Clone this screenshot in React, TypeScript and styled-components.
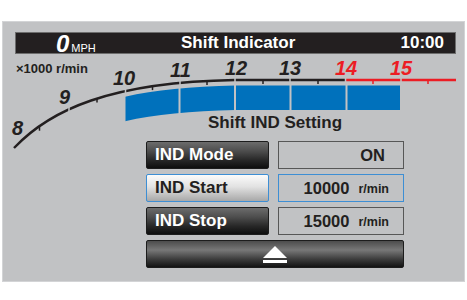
import React from 'react';
import styled, { createGlobalStyle } from 'styled-components';

const INK = '#231f20';
const PANEL = '#c1c2c4';
const BLUE = '#0071bc';
const RED = '#ec1c24';
const FOCUS = '#3d8ed4';

const GlobalStyle = createGlobalStyle`
  html, body { margin: 0; padding: 0; background: #ffffff; }
  body { font-family: "Liberation Sans", Arial, sans-serif; }
`;

const Panel = styled.div`
  box-sizing: border-box;
  width: 463px;
  height: 261px;
  margin: 21px 0 0 2px;
  background: ${PANEL};
  border: 1px solid #d3d4d6;
  display: flex;
  flex-direction: column;
`;

const Header = styled.header`
  box-sizing: border-box;
  height: 22px;
  margin: 10px 8px 0 12px;
  background: ${INK};
  border: 1px solid #6d6d6d;
  color: #ffffff;
  display: grid;
  grid-template-columns: 165px auto 1fr;
  font-weight: 700;
  font-size: 17px;
  line-height: 20px;
  white-space: nowrap;
`;

const Speed = styled.div`
  padding: 1px 0 0 40px;
  font-size: 24px;
  font-style: italic;
  line-height: 20px;
`;

const SpeedUnit = styled.span`
  font-size: 11px;
  font-style: normal;
  font-weight: 400;
  line-height: 0;
  margin-left: 2px;
`;

const Title = styled.div``;

const Clock = styled.div`
  text-align: right;
  padding-right: 11px;
`;

const Dial = styled.div`
  flex: 1;
  display: grid;
  grid-template: 1fr / 1fr;
  & > * {
    grid-area: 1 / 1;
  }
`;

const Gauge = styled.svg`
  display: block;
  align-self: start;
  justify-self: start;
`;

const UnitLabel = styled.div`
  align-self: start;
  justify-self: start;
  margin: 8px 0 0 13px;
  font-size: 13px;
  font-weight: 700;
  line-height: 14px;
  color: ${INK};
`;

const Settings = styled.section`
  align-self: end;
  justify-self: start;
  width: 258px;
  margin: 0 0 13px 143px;
  display: flex;
  flex-direction: column;
`;

const SettingsTitle = styled.div`
  text-align: center;
  font-size: 17px;
  font-weight: 700;
  line-height: 20px;
  color: ${INK};
  margin-bottom: 8px;
`;

const Rows = styled.div`
  display: grid;
  grid-template-columns: 123px 126px;
  column-gap: 9px;
  row-gap: 5px;
  grid-auto-rows: 28px;
`;

const Button = styled.div<{ $light?: boolean }>`
  box-sizing: border-box;
  display: flex;
  align-items: center;
  padding-left: 8px;
  border-radius: 2px;
  font-size: 17px;
  font-weight: 700;
  white-space: nowrap;
  color: ${(p) => (p.$light ? INK : '#ffffff')};
  border: 1px solid ${(p) => (p.$light ? FOCUS : '#1c1c1c')};
  background: ${(p) =>
    p.$light
      ? 'linear-gradient(#fbfbfb 0%, #e2e2e2 45%, #a8a8a8 100%)'
      : 'linear-gradient(#6c6c6c 0%, #4d4d4d 35%, #272727 70%, #0e0e0e 100%)'};
`;

const Value = styled.div<{ $active?: boolean; $pad: number }>`
  box-sizing: border-box;
  display: flex;
  align-items: center;
  justify-content: flex-end;
  padding-right: ${(p) => p.$pad}px;
  border: 1px solid ${(p) => (p.$active ? FOCUS : '#575757')};
  font-size: 16.5px;
  font-weight: 700;
  color: ${INK};
  white-space: nowrap;
`;

const ValueUnit = styled.span`
  font-size: 12.5px;
  margin-left: 9px;
  padding-top: 2px;
`;

const EjectButton = styled.div`
  grid-column: 1 / -1;
  box-sizing: border-box;
  display: flex;
  align-items: center;
  justify-content: center;
  border-radius: 2px;
  border: 1px solid #1c1c1c;
  background: linear-gradient(#4c4c4c 0%, #777777 35%, #3c3c3c 70%, #131313 100%);
`;

const EjectIcon = () => (
  <svg width="24" height="17" viewBox="0 0 24 17" style={{ marginTop: 1 }}>
    <polygon points="12,0 24,12 0,12" fill="#ffffff" />
    <rect x="0" y="14" width="24" height="3" fill="#ffffff" />
  </svg>
);

const numberStyle = {
  fontFamily: '"Liberation Sans", Arial, sans-serif',
  fontWeight: 700,
  fontStyle: 'italic',
  fontSize: 20,
} as const;

const scaleNumbers = [
  { n: '8', x: 12, y: 135, c: INK },
  { n: '9', x: 59, y: 104, c: INK },
  { n: '10', x: 113, y: 85, c: INK },
  { n: '11', x: 170, y: 77, c: INK },
  { n: '12', x: 225, y: 75, c: INK },
  { n: '13', x: 279, y: 75, c: INK },
  { n: '14', x: 335, y: 75, c: RED },
  { n: '15', x: 390, y: 75, c: RED },
];

const ticks = [
  { x: 39.5, y: 126.7, c: INK },
  { x: 97, y: 98.6, c: INK },
  { x: 152.5, y: 86.1, c: INK },
  { x: 207, y: 81, c: INK },
  { x: 263, y: 80, c: INK },
  { x: 318, y: 80, c: INK },
  { x: 373, y: 80, c: RED },
  { x: 428, y: 80, c: RED },
];

const gaps = [
  { x: 69, y: 110 },
  { x: 125.5, y: 91 },
  { x: 180, y: 83 },
  { x: 235, y: 80 },
  { x: 290, y: 80 },
  { x: 345.5, y: 80 },
  { x: 401, y: 80 },
];

const barSeparators = [179.5, 235, 290.5, 346.5];

const TachGauge = () => (
  <Gauge width="461" height="100" viewBox="3 54 461 100">
    <defs>
      <clipPath id="barClip">
        <rect x="125.5" y="60" width="275" height="80" />
      </clipPath>
    </defs>
    <path
      d="M14,153.5 C50,115.5 110,87.5 235,85.5 L400,85.5 L400,110 L235,110 C110,112 50,140 14,178 Z"
      fill={BLUE}
      clipPath="url(#barClip)"
    />
    {barSeparators.map((x) => (
      <rect key={x} x={x - 1} y="80" width="2" height="50" fill={PANEL} />
    ))}
    <path d="M14,148 C50,110 110,82 235,80 L345.5,80" fill="none" stroke={INK} strokeWidth="2.4" />
    <path d="M345.5,80 L456,80" fill="none" stroke={RED} strokeWidth="2.4" />
    {ticks.map((t) => (
      <line key={t.x} x1={t.x} y1={t.y} x2={t.x} y2={t.y + 4} stroke={t.c} strokeWidth="1.5" />
    ))}
    {gaps.map((g) => (
      <rect key={g.x} x={g.x - 0.75} y={g.y - 4} width="1.5" height="8" fill={PANEL} />
    ))}
    {scaleNumbers.map((s) => (
      <text key={s.n} x={s.x} y={s.y} fill={s.c} style={numberStyle}>
        {s.n}
      </text>
    ))}
  </Gauge>
);

export default function App() {
  return (
    <>
      <GlobalStyle />
      <Panel>
        <Header>
          <Speed>
            0<SpeedUnit>MPH</SpeedUnit>
          </Speed>
          <Title>Shift Indicator</Title>
          <Clock>10:00</Clock>
        </Header>
        <Dial>
          <TachGauge />
          <UnitLabel>×1000 r/min</UnitLabel>
          <Settings>
            <SettingsTitle>Shift IND Setting</SettingsTitle>
            <Rows>
              <Button>IND Mode</Button>
              <Value $pad={18}>ON</Value>
              <Button $light>IND Start</Button>
              <Value $active $pad={14}>
                10000<ValueUnit>r/min</ValueUnit>
              </Value>
              <Button>IND Stop</Button>
              <Value $pad={14}>
                15000<ValueUnit>r/min</ValueUnit>
              </Value>
              <EjectButton>
                <EjectIcon />
              </EjectButton>
            </Rows>
          </Settings>
        </Dial>
      </Panel>
    </>
  );
}
